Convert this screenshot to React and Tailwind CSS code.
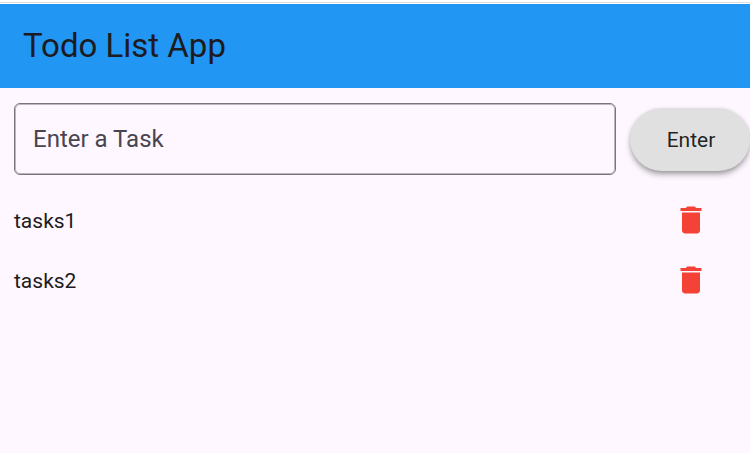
import { useState } from "react";
import { MdDelete } from "react-icons/md";

function TaskRow({ name, onDelete }) {
  return (
    <li className="flex h-15 items-center justify-between">
      <span className="pt-0.5 text-[21px] leading-7">{name}</span>
      <button
        type="button"
        aria-label={`Delete ${name}`}
        onClick={onDelete}
        className="flex size-15 items-center justify-center text-[#f44336]"
      >
        <MdDelete className="size-9" />
      </button>
    </li>
  );
}

export default function App() {
  const [tasks, setTasks] = useState(["tasks1", "tasks2"]);
  const [draft, setDraft] = useState("");

  const addTask = (event) => {
    event.preventDefault();
    if (!draft.trim()) return;
    setTasks([...tasks, draft.trim()]);
    setDraft("");
  };

  return (
    <div className="min-h-screen bg-[#fef7ff] font-['Roboto',sans-serif] text-[#1d1b20]">
      <div className="h-1 bg-white pt-[2px]">
        <div className="h-px bg-[#dddddd]" />
      </div>
      <header className="flex h-21 items-center bg-[#2196f3] px-[23px]">
        <h1 className="text-[33px] leading-10">Todo List App</h1>
      </header>
      <main>
        <form onSubmit={addTask} className="flex items-center gap-3.5 pt-[15px] pl-3.5">
          <input
            type="text"
            aria-label="Enter a Task"
            placeholder="Enter a Task"
            value={draft}
            onChange={(event) => setDraft(event.target.value)}
            className="h-18 min-w-0 flex-1 rounded-md border border-[#79747e] px-4.5 text-2xl outline-1 -outline-offset-2 outline-[#79747e]/50 placeholder:text-[#49454f]"
          />
          <button
            type="submit"
            className="h-[63px] w-30 shrink-0 rounded-full bg-[#e0e0e0] pt-0.5 pl-0.5 text-[21px] leading-7 text-black/87 shadow-[0_4px_6px_-1px_rgba(0,0,0,0.36),0_1px_4px_rgba(0,0,0,0.1)]"
          >
            Enter
          </button>
        </form>
        <ul className="mt-[15px] pr-[29px] pl-3.5">
          {tasks.map((task, index) => (
            <TaskRow
              key={index}
              name={task}
              onDelete={() => setTasks(tasks.filter((_, i) => i !== index))}
            />
          ))}
        </ul>
      </main>
    </div>
  );
}
